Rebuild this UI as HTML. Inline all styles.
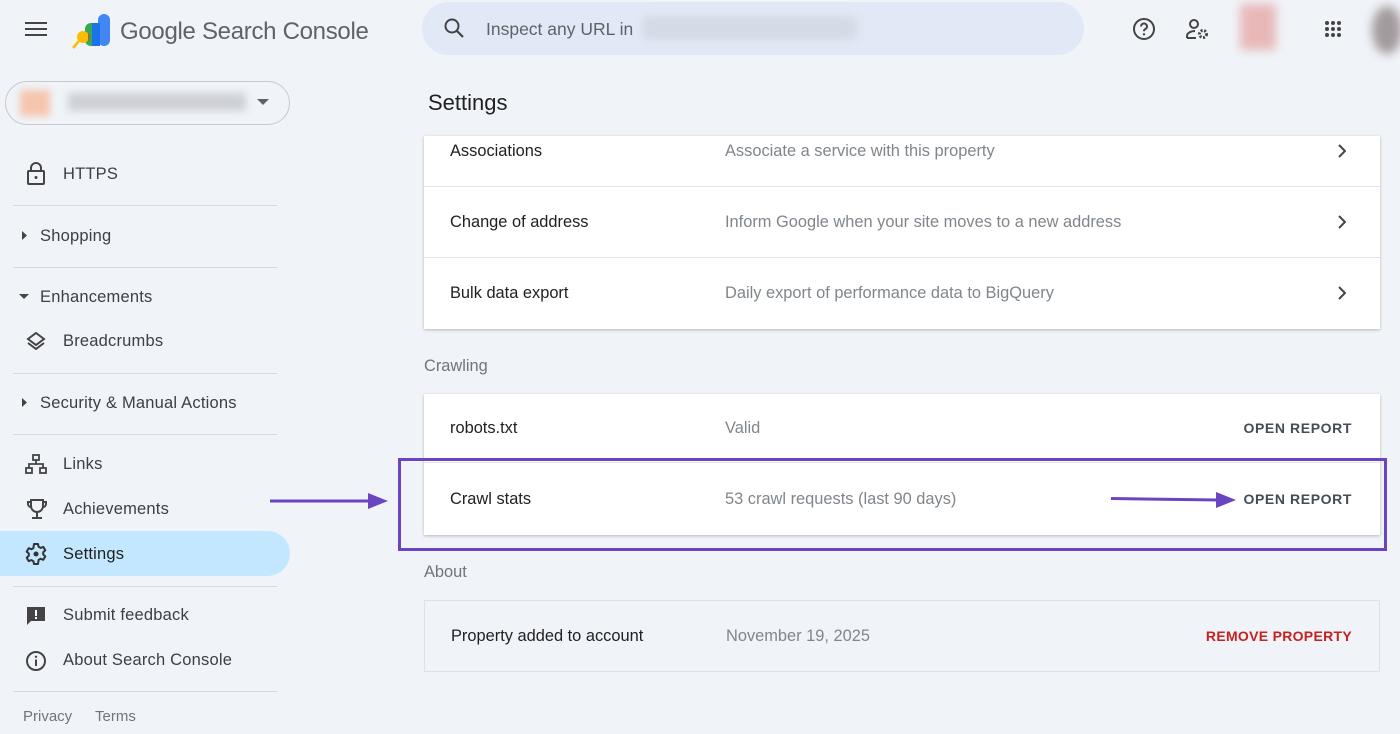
<!DOCTYPE html>
<html><head><meta charset="utf-8"><style>
*{box-sizing:border-box;margin:0;padding:0}
body{width:1400px;height:734px;background:#f0f4f9;font-family:"Liberation Sans",Arial,sans-serif;color:#1f1f1f;position:relative;overflow:hidden}
.abs{position:absolute}
.side{font-size:16.5px;color:#3c4043;letter-spacing:.2px}
.hr{position:absolute;left:13px;width:264px;height:1px;background:#d6d9dd}
.card{position:absolute;left:424px;width:956px;background:#fff;box-shadow:0 1px 3px rgba(0,0,0,.25)}
.row{position:relative;border-bottom:1px solid #e4e4e4;font-size:16.4px}
.row:last-child{border-bottom:none}
.row .a{position:absolute;left:26px;color:#202124}
.row .b{position:absolute;left:301px;color:#80868b}
.row .c{position:absolute;right:28px;font-size:14px;font-weight:bold;color:#444c55;letter-spacing:.6px}
.row .chev{position:absolute;right:34px}
.lbl{position:absolute;left:424px;font-size:16.4px;color:#70757a}
</style></head><body>
<svg class="abs" style="left:25px;top:21px" width="22" height="16"><rect y="1" width="22" height="2" fill="#444"/><rect y="7" width="22" height="2" fill="#444"/><rect y="13" width="22" height="2" fill="#444"/></svg>
<svg class="abs" style="left:72px;top:13px" width="38" height="36" viewBox="0 0 38 36">
<rect x="26" y="1" width="12" height="32" rx="6" fill="#4285f4"/>
<rect x="13" y="10" width="13" height="23" rx="6" fill="#34a853"/>
<rect x="20" y="10" width="8" height="23" fill="#1a73e8"/>
<circle cx="11" cy="24" r="6" fill="#fbbc04"/>
<path d="M16 20a6 6 0 0 1 0 8" fill="#ea4335"/>
<line x1="7" y1="28" x2="1" y2="35" stroke="#fbbc04" stroke-width="2.5"/>
</svg>
<div class="abs" style="left:120px;top:18px;font-size:24px;letter-spacing:-.3px;color:#5f6368">Google Search Console</div>
<div class="abs" style="left:422px;top:2px;width:662px;height:53px;border-radius:27px;background:#e1e9f6"></div>
<svg class="abs" style="left:443px;top:17px" width="22" height="22" viewBox="0 0 22 22"><circle cx="9" cy="9" r="6.5" fill="none" stroke="#444" stroke-width="2"/><line x1="14" y1="14" x2="20" y2="20" stroke="#444" stroke-width="2.2"/></svg>
<div class="abs" style="left:486px;top:19px;font-size:17.5px;color:#5f6368">Inspect any URL in</div>
<div class="abs" style="left:642px;top:16px;width:215px;height:24px;background:#d4dbe6;filter:blur(4px);border-radius:6px"></div>
<svg class="abs" style="left:1132px;top:17px" width="24" height="24" viewBox="0 0 24 24"><circle cx="12" cy="12" r="10" fill="none" stroke="#444" stroke-width="2"/><path d="M9 9.5a3 3 0 1 1 4 2.8c-.8.4-1 1-1 2" fill="none" stroke="#444" stroke-width="2"/><circle cx="12" cy="17.3" r="1.2" fill="#444"/></svg>
<svg class="abs" style="left:1185px;top:18px" width="26" height="24" viewBox="0 0 26 24"><circle cx="9" cy="6" r="4" fill="none" stroke="#444" stroke-width="2"/><path d="M2 20v-2c0-3 4-5 8-5" fill="none" stroke="#444" stroke-width="2"/><line x1="2" y1="20" x2="11" y2="20" stroke="#444" stroke-width="2"/><circle cx="18" cy="16" r="3.5" fill="none" stroke="#444" stroke-width="3" stroke-dasharray="2 1.5"/></svg>
<div class="abs" style="left:1240px;top:4px;width:36px;height:46px;background:#e8b8b8;filter:blur(5px)"></div>
<svg class="abs" style="left:1324px;top:20px" width="18" height="18"><g fill="#444"><circle cx="3" cy="3" r="2"/><circle cx="9" cy="3" r="2"/><circle cx="15" cy="3" r="2"/><circle cx="3" cy="9" r="2"/><circle cx="9" cy="9" r="2"/><circle cx="15" cy="9" r="2"/><circle cx="3" cy="15" r="2"/><circle cx="9" cy="15" r="2"/><circle cx="15" cy="15" r="2"/></g></svg>
<div class="abs" style="left:1372px;top:6px;width:30px;height:48px;background:#a39a9c;filter:blur(5px);border-radius:50%"></div>
<div class="abs" style="left:5px;top:81px;width:285px;height:44px;border:1px solid #c7c9cc;border-radius:22px"></div>
<div class="abs" style="left:20px;top:90px;width:30px;height:26px;background:#f5c4ac;filter:blur(4px)"></div>
<div class="abs" style="left:68px;top:93px;width:178px;height:18px;background:#cdd0d5;filter:blur(4px)"></div>
<svg class="abs" style="left:257px;top:99px" width="12" height="7"><path d="M0 0h12L6 6z" fill="#5f6368"/></svg>

<svg class="abs" style="left:26px;top:162px" width="20" height="24" viewBox="0 0 20 24"><rect x="2" y="9" width="16" height="13" rx="1" fill="none" stroke="#444" stroke-width="2"/><path d="M5 9V6a5 5 0 0 1 10 0v3" fill="none" stroke="#444" stroke-width="2"/><circle cx="10" cy="15.5" r="1.5" fill="#444"/></svg>
<div class="abs side" style="left:63px;top:165px">HTTPS</div>
<div class="hr" style="top:205px"></div>
<svg class="abs" style="left:22px;top:231px" width="6" height="9"><path d="M0 0l5 4.5L0 9z" fill="#444"/></svg>
<div class="abs side" style="left:40px;top:227px">Shopping</div>
<div class="hr" style="top:267px"></div>
<svg class="abs" style="left:19px;top:294px" width="10" height="6"><path d="M0 0h10L5 5z" fill="#444"/></svg>
<div class="abs side" style="left:40px;top:288px">Enhancements</div>
<svg class="abs" style="left:26px;top:332px" width="20" height="18" viewBox="0 0 20 18"><path d="M10 1l8 6-8 6-8-6z" fill="none" stroke="#444" stroke-width="2"/><path d="M2 11l8 6 8-6" fill="none" stroke="#444" stroke-width="2"/></svg>
<div class="abs side" style="left:63px;top:332px">Breadcrumbs</div>
<div class="hr" style="top:373px"></div>
<svg class="abs" style="left:22px;top:398px" width="6" height="9"><path d="M0 0l5 4.5L0 9z" fill="#444"/></svg>
<div class="abs side" style="left:40px;top:394px">Security &amp; Manual Actions</div>
<div class="hr" style="top:434px"></div>
<svg class="abs" style="left:25px;top:454px" width="22" height="20" viewBox="0 0 22 20"><g fill="none" stroke="#444" stroke-width="1.8"><rect x="8" y="1" width="6" height="5"/><rect x="1" y="14" width="6" height="5"/><rect x="15" y="14" width="6" height="5"/><path d="M11 6v4M4 14v-4h14v4"/></g></svg>
<div class="abs side" style="left:63px;top:455px">Links</div>
<svg class="abs" style="left:26px;top:498px" width="22" height="22" viewBox="0 0 22 22"><g fill="none" stroke="#444" stroke-width="2"><path d="M5 2h12v6a6 6 0 0 1-12 0z"/><path d="M5 4H2v2a3 3 0 0 0 3 3M17 4h3v2a3 3 0 0 1-3 3M11 14v5M6 20h10"/></g></svg>
<div class="abs side" style="left:63px;top:500px">Achievements</div>
<div class="abs" style="left:0;top:531px;width:290px;height:45px;background:#c2e7ff;border-radius:0 23px 23px 0"></div>
<svg class="abs" style="left:24px;top:542px" width="24" height="24" viewBox="0 0 24 24"><path d="M10 2h4l.6 2.8 2 1.1 2.7-1 2 3.4-2.1 1.9v2.3l2.1 1.9-2 3.4-2.7-1-2 1.1L14 22h-4l-.6-2.8-2-1.1-2.7 1-2-3.4 2.1-1.9v-2.3L2.7 9.6l2-3.4 2.7 1 2-1.1z" fill="none" stroke="#333" stroke-width="2" stroke-linejoin="round"/><circle cx="12" cy="12" r="2.5" fill="#333"/></svg>
<div class="abs side" style="left:63px;top:545px;color:#1f1f1f">Settings</div>
<div class="hr" style="top:586px"></div>
<svg class="abs" style="left:26px;top:606px" width="20" height="20" viewBox="0 0 20 20"><path d="M1 1h18v14H5l-4 4z" fill="#444"/><rect x="9" y="4" width="2" height="6" fill="#fff"/><rect x="9" y="11" width="2" height="2" fill="#fff"/></svg>
<div class="abs side" style="left:63px;top:606px">Submit feedback</div>
<svg class="abs" style="left:25px;top:650px" width="22" height="22" viewBox="0 0 22 22"><circle cx="11" cy="11" r="9" fill="none" stroke="#444" stroke-width="2"/><rect x="10" y="9.5" width="2" height="6.5" fill="#444"/><circle cx="11" cy="6.8" r="1.2" fill="#444"/></svg>
<div class="abs side" style="left:63px;top:651px">About Search Console</div>
<div class="hr" style="top:691px"></div>
<div class="abs" style="left:23px;top:708px;font-size:15px;color:#70757a">Privacy</div>
<div class="abs" style="left:95px;top:708px;font-size:15px;color:#70757a">Terms</div>
<div class="abs" style="left:428px;top:90px;font-size:22px;color:#202124">Settings</div>
<div class="card" style="top:136px;height:193px">
 <div class="row" style="height:51px"><span class="a" style="top:6px">Associations</span><span class="b" style="top:6px">Associate a service with this property</span><svg class="chev" style="top:8px" width="8" height="14"><path d="M1 1l6 6-6 6" fill="none" stroke="#444" stroke-width="2"/></svg></div>
 <div class="row" style="height:71px"><span class="a" style="top:26px">Change of address</span><span class="b" style="top:26px">Inform Google when your site moves to a new address</span><svg class="chev" style="top:28px" width="8" height="14"><path d="M1 1l6 6-6 6" fill="none" stroke="#444" stroke-width="2"/></svg></div>
 <div class="row" style="height:71px"><span class="a" style="top:26px">Bulk data export</span><span class="b" style="top:26px">Daily export of performance data to BigQuery</span><svg class="chev" style="top:28px" width="8" height="14"><path d="M1 1l6 6-6 6" fill="none" stroke="#444" stroke-width="2"/></svg></div>
</div>
<div class="lbl" style="top:357px">Crawling</div>
<div class="card" style="top:394px;height:141px">
 <div class="row" style="height:69px"><span class="a" style="top:25px">robots.txt</span><span class="b" style="top:25px">Valid</span><span class="c" style="top:26px">OPEN REPORT</span></div>
 <div class="row" style="height:72px"><span class="a" style="top:27px">Crawl stats</span><span class="b" style="top:27px">53 crawl requests (last 90 days)</span><span class="c" style="top:28px">OPEN REPORT</span></div>
</div>
<div class="abs" style="left:398px;top:458px;width:989px;height:93px;border:3px solid #6b44c0"></div>
<svg class="abs" style="left:1108px;top:489px" width="130" height="22"><path d="M3 9.5L110 11" stroke="#6b44c0" stroke-width="3"/><path d="M108 3l20 8-20 8z" fill="#6b44c0"/></svg>
<svg class="abs" style="left:268px;top:490px" width="122" height="22"><path d="M2 11h100" stroke="#6b44c0" stroke-width="3"/><path d="M100 3l20 8-20 8z" fill="#6b44c0"/></svg>
<div class="lbl" style="top:563px">About</div>
<div class="abs" style="left:424px;top:600px;width:956px;height:72px;border:1px solid #dde0e4;background:#f0f4f9;font-size:16.4px">
 <span class="abs" style="left:26px;top:26px;color:#202124">Property added to account</span>
 <span class="abs" style="left:301px;top:26px;color:#80868b">November 19, 2025</span>
 <span class="abs" style="right:27px;top:27px;font-size:14px;font-weight:bold;color:#c5221f;letter-spacing:.3px">REMOVE PROPERTY</span>
</div>
</body></html>
